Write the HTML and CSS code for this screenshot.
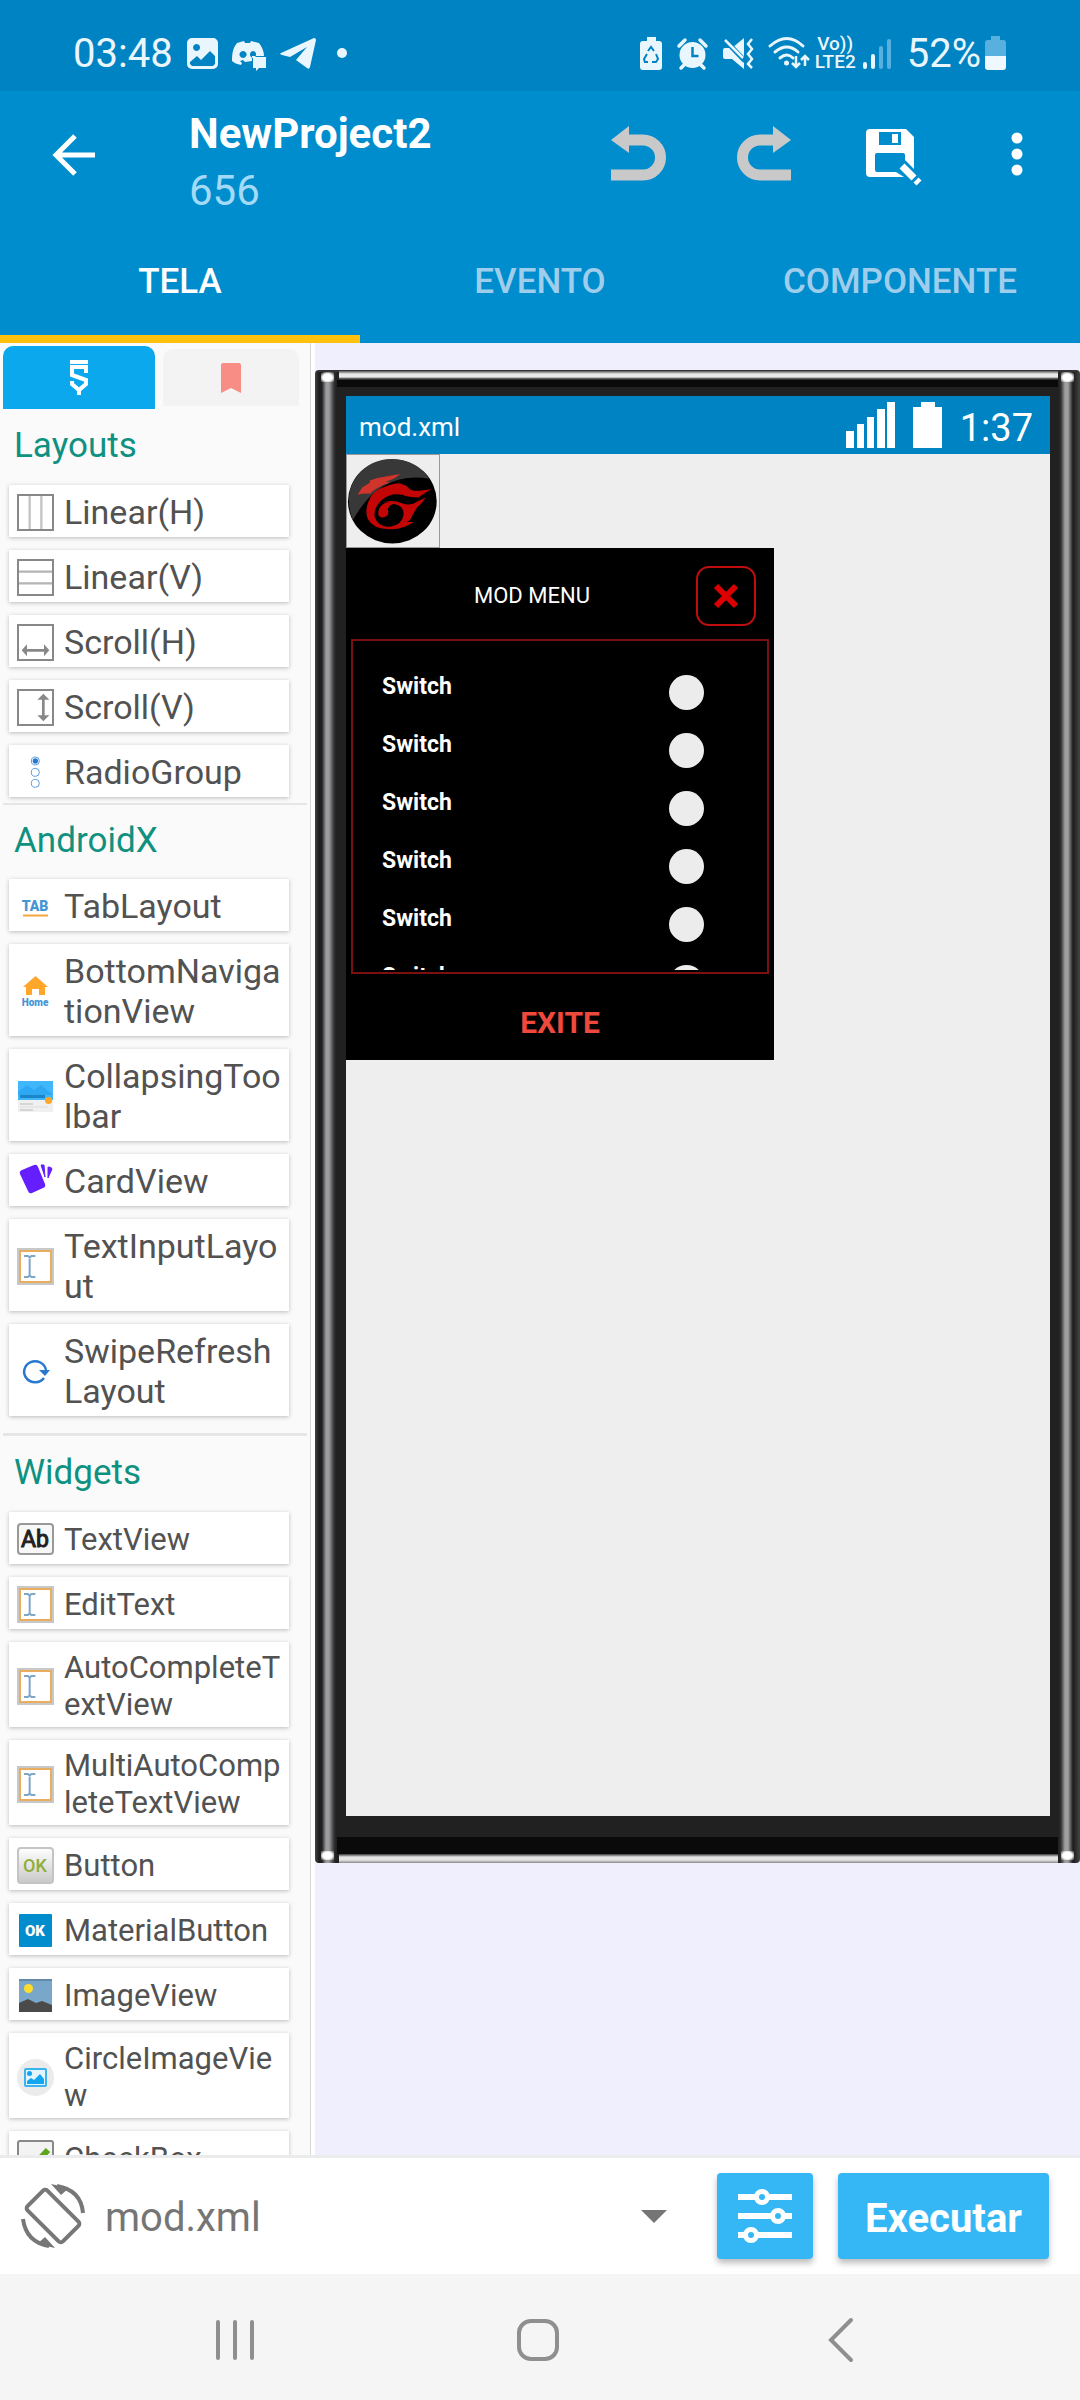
FILE: index.html
```html
<!DOCTYPE html>
<html lang="pt-BR">
<head>
    <meta charset="UTF-8">
    <meta name="viewport" content="width=device-width, initial-scale=1.0">
    <title>NewProject2</title>
    <link rel="stylesheet" href="styles.css">
</head>
<body>

<!-- Ícones usados mais de uma vez -->
<svg class="sprite" aria-hidden="true">
    <symbol id="icon-edit" viewBox="0 0 111 111">
        <rect x="3" y="3" width="105" height="105" fill="#fff" stroke="#c8c8c8" stroke-width="6"/>
        <rect x="9" y="9" width="93" height="93" fill="none" stroke="#e8ad5e" stroke-width="6"/>
        <path d="M21 24h12l5 5 5-5h12M21 87h12l5-5 5 5h12M38 28v56" fill="none" stroke="#7ea6c6" stroke-width="6"/>
    </symbol>
</svg>

<header>
    <div class="status-bar">
        <div class="status-left">
            <span>03:48</span>
            <svg width="31" height="31" viewBox="0 0 31 31"><path fill="#eaf6fd" fill-rule="evenodd" d="M5 0h21a5 5 0 0 1 5 5v21a5 5 0 0 1-5 5H5a5 5 0 0 1-5-5V5a5 5 0 0 1 5-5zM9.500 6a3.500 3.500 0 1 0 .1 0zM3 24v2l2 2h21l2-2v-8l-5-5-9 9-4-4z"/></svg>
            <svg width="34" height="31" viewBox="0 0 34 31"><path fill="#eaf6fd" fill-rule="evenodd" d="M5 5l7-2 1 2h5l1-2 8 2c3 4 5 8 5 13H20v5l-7 1-2-2-3 1 2 2-1 2c-4-1-7-2-9-4 0-8 1-13 5-18zM11 13a3.500 3.500 0 1 0 .1 0zM21 13a3 3.500 0 1 0 .1 0z"/><path fill="#eaf6fd" d="M21 19h13v11h-7l-3 3v-3h-3z"/></svg>
            <svg width="36" height="31" viewBox="0 0 36 31"><path fill="#eaf6fd" d="M1 15L34 0q2 0 2 2l-6 27q-1 3-3 1l-11-8L27 9 10 19l-8-2q-3-1-1-2z"/></svg>
            <svg width="24" height="12" viewBox="0 0 24 12"><circle cx="12" cy="6" r="5" fill="#eaf6fd"/></svg>
        </div>
        <div class="status-right">
            <svg width="22" height="33" viewBox="0 0 22 33"><path fill="#eaf6fd" d="M7 0h9v4h3q3 0 3 3v23q0 3-3 3H3q-3 0-3-3V7q0-3 3-3h4z"/><path d="M8 14l3-4 3 4M16 17l2 5-2 3h-4M8 25H5l-1-3 3-5" fill="none" stroke="#0083c2" stroke-width="2"/></svg>
            <svg width="29" height="31" viewBox="0 0 29 31"><path d="M1 8l6-6M28 8l-6-6M7 26l-4 4M22 26l4 4" stroke="#eaf6fd" stroke-width="3.500" stroke-linecap="round"/><circle cx="14.500" cy="17" r="13" fill="#eaf6fd"/><path d="M14.500 9v9h6" fill="none" stroke="#0083c2" stroke-width="2.500"/></svg>
            <svg width="30" height="31" viewBox="0 0 30 31"><path fill="#eaf6fd" d="M0 12q0-2 2-2h7l12-10v31L9 21H2q-2 0-2-2z"/><path d="M1 1l21 22" stroke="#0083c2" stroke-width="5"/><path d="M2 2l18 18" stroke="#eaf6fd" stroke-width="2.500"/><path d="M29 1l-4 5 4 5-4 5 4 5-4 5 4 4" fill="none" stroke="#eaf6fd" stroke-width="2.500"/></svg>
            <div class="network">
                <svg width="42" height="32" viewBox="0 0 42 32"><path d="M1 9q17-15 33 0M6 15q12-10 23 0M11 21q7-6 13 0" fill="none" stroke="#eaf6fd" stroke-width="3" stroke-linecap="round"/><circle cx="17.500" cy="26" r="2.500" fill="#eaf6fd"/><path d="M27 19v11m-4-4l4 4 4-4M36 29V19m-4 4l4-4 4 4" fill="none" stroke="#eaf6fd" stroke-width="2.500"/></svg>
                <div class="volte"><span>Vo))</span><span>LTE2</span></div>
                <svg width="28" height="31" viewBox="0 0 28 31"><path d="M2 26v3M10 18v11" stroke="#eaf6fd" stroke-width="4" stroke-linecap="round"/><path d="M18 10v19M26 3v26" stroke="#58b0df" stroke-width="4" stroke-linecap="round"/></svg>
            </div>
            <div class="battery">
                <span>52%</span>
                <svg width="21" height="34" viewBox="0 0 21 34"><path fill="#58b0df" d="M6 0h9v4h3q3 0 3 3v13H0V7q0-3 3-3h3z"/><path fill="#eff8fe" d="M0 20h21v11q0 3-3 3H3q-3 0-3-3z"/></svg>
            </div>
        </div>
    </div>

    <div class="toolbar">
        <button class="back-btn" aria-label="Voltar"><svg width="42" height="42" viewBox="0 0 42 42"><path d="M42 21H3M22 2L3 21l19 19" fill="none" stroke="#fff" stroke-width="5"/></svg></button>
        <div class="project">
            <h1>NewProject2</h1>
            <p>656</p>
        </div>
        <div class="actions">
            <button aria-label="Desfazer"><svg width="56" height="58" viewBox="0 0 56 58"><path d="M0 49h32a17.500 17.500 0 0 0 0-35H16" fill="none" stroke="#c9c9c9" stroke-width="11"/><path d="M0 14L18 0v27z" fill="#c9c9c9"/></svg></button>
            <button aria-label="Refazer"><svg width="54" height="58" viewBox="0 0 54 58"><path d="M53 49H22a17.500 17.500 0 0 1 0-35h16" fill="none" stroke="#c9c9c9" stroke-width="11"/><path d="M53 14L35 0v27z" fill="#c9c9c9"/></svg></button>
            <button aria-label="Salvar"><svg width="64" height="60" viewBox="0 0 64 60"><path fill="#fff" fill-rule="evenodd" d="M11 4h36l8 8v32L46 35v-5q0-2-2-2H18q-2 0-2 2v15q0 2 2 2h19l8 5H11q-4 0-4-4V8q0-4 4-4zM20 7v13h22V7z"/><path fill="#fff" d="M33 9h6v9h-6z"/><path d="M43 41l12 12" stroke="#fff" stroke-width="7"/><path d="M57 55l3 3" stroke="#fff" stroke-width="7"/></svg></button>
            <button aria-label="Mais opções"><svg width="12" height="46" viewBox="0 0 12 46"><g fill="#fff"><circle cx="6" cy="6" r="5.500"/><circle cx="6" cy="22" r="5.500"/><circle cx="6" cy="38" r="5.500"/></g></svg></button>
        </div>
    </div>

    <nav class="tabs">
        <a href="#tela" class="active">TELA</a>
        <a href="#evento">EVENTO</a>
        <a href="#componente">COMPONENTE</a>
    </nav>
</header>

<main>
    <aside class="palette">
        <div class="palette-tabs">
            <button class="selected" aria-label="Componentes"><svg width="18" height="36" viewBox="0 0 18 36"><path d="M0 2h18M16 13V7H2v8l14 5v4l-7 6-7-6v-3M9 29v6" fill="none" stroke="#fff" stroke-width="4"/></svg></button>
            <button aria-label="Favoritos"><svg width="20" height="30" viewBox="0 0 20 30"><path d="M2 0h16q2 0 2 2v28l-10-5-10 5V2q0-2 2-2z" fill="#f88d86"/></svg></button>
        </div>

        <!-- Layouts -->
        <section>
            <h2>Layouts</h2>
            <div class="items">
                <button><svg viewBox="0 0 111 111"><path d="M38 4v103M73 4v103" stroke="#c4c4c4" stroke-width="7"/><rect x="3" y="3" width="105" height="105" fill="none" stroke="#888" stroke-width="6"/></svg><span>Linear(H)</span></button>
                <button><svg viewBox="0 0 111 111"><path d="M4 38h103M4 73h103" stroke="#b4b4b4" stroke-width="7"/><rect x="3" y="3" width="105" height="105" fill="none" stroke="#888" stroke-width="6"/></svg><span>Linear(V)</span></button>
                <button><svg viewBox="0 0 111 111"><rect x="3" y="3" width="105" height="105" fill="#fff" stroke="#888" stroke-width="6"/><path d="M14 79l16-18v14h51V61l16 18-16 18V83H30v14z" fill="#888"/></svg><span>Scroll(H)</span></button>
                <button><svg viewBox="0 0 111 111"><rect x="3" y="3" width="105" height="105" fill="#fff" stroke="#888" stroke-width="6"/><path d="M79 14l18 18H83v47h14L79 97 61 79h14V32H61z" fill="#888"/></svg><span>Scroll(V)</span></button>
                <button><svg viewBox="0 0 111 111"><g fill="none" stroke="#5d9bdc" stroke-width="3"><circle cx="55" cy="21" r="12"/><circle cx="55" cy="55" r="12"/><circle cx="55" cy="88" r="12"/></g><circle cx="55" cy="21" r="8" fill="#2478d0"/></svg><span>RadioGroup</span></button>
            </div>
        </section>

        <!-- AndroidX -->
        <section class="androidx">
            <h2>AndroidX</h2>
            <div class="items">
                <button><svg viewBox="0 0 37 37"><text x="18" y="23" font-size="14" font-weight="900" fill="#4595d6" text-anchor="middle">TAB</text><path d="M6 27.500h25" stroke="#f4a63c" stroke-width="2"/></svg><span>TabLayout</span></button>
                <button><svg viewBox="0 0 37 37"><path d="M18.500 3L31 14h-3v8h-6v-6h-7v6H9v-8H6z" fill="#ffa62b"/><text x="18" y="33" font-size="10" font-weight="900" fill="#4595d6" text-anchor="middle">Home</text></svg><span>BottomNavigationView</span></button>
                <button><svg viewBox="0 0 37 37"><path d="M1 3h35v19H1z" fill="#40b7fb"/><path d="M1 14l9-7 7 5 7-5 11 9v1H1z" fill="#2fa8f4"/><path d="M3 17h25v3H3z" fill="#1a86c8"/><path d="M1 22h35v12H1z" fill="#f0f0f0"/><path d="M3 26h13M3 32h13" stroke="#bbb"/><path d="M3 29h28" stroke="#ddd"/><circle cx="31.500" cy="22.500" r="3.500" fill="#ffa62b"/></svg><span>CollapsingToolbar</span></button>
                <button><svg viewBox="0 0 37 37"><path d="M5 7l12-5q3-1 4 2l7 17q1 3-2 4l-11 5q-3 1-4-2L3 11q-1-3 2-4z" fill="#651fff"/><path d="M24 2h3l1 12zM31 4q4 0 4 2l-4 9z" fill="#651fff" stroke="#651fff" stroke-width="1"/></svg><span>CardView</span></button>
                <button><svg><use href="#icon-edit"/></svg><span>TextInputLayout</span></button>
                <button><svg viewBox="0 0 37 37"><path d="M27 25a11 10.500 0 1 1 2-8" fill="none" stroke="#2878cf" stroke-width="2.500"/><path d="M22 17h11l-5 6z" fill="#2878cf"/></svg><span>SwipeRefreshLayout</span></button>
            </div>
        </section>

        <!-- Widgets -->
        <section class="widgets">
            <h2>Widgets</h2>
            <div class="items">
                <button><svg viewBox="0 0 37 37"><rect x="1" y="3" width="35" height="30" rx="3" fill="#f7f7f7" stroke="#999" stroke-width="2"/><text x="18" y="26" font-size="23" fill="#222" stroke="#222" text-anchor="middle">Ab</text></svg><span>TextView</span></button>
                <button><svg><use href="#icon-edit"/></svg><span>EditText</span></button>
                <button><svg><use href="#icon-edit"/></svg><span>AutoCompleteTextView</span></button>
                <button><svg><use href="#icon-edit"/></svg><span>MultiAutoCompleteTextView</span></button>
                <button><svg viewBox="0 0 37 37"><defs><linearGradient id="okfill" x2="0" y2="1"><stop stop-color="#fff"/><stop offset="1" stop-color="#c8c8c8"/></linearGradient></defs><rect x="1" y="1" width="35" height="35" rx="3" fill="url(#okfill)" stroke="#c4c4c4" stroke-width="2"/><text x="18" y="25" font-size="18" font-weight="500" fill="#8fae38" text-anchor="middle">OK</text></svg><span>Button</span></button>
                <button><svg viewBox="0 0 37 37"><rect x="2" y="2" width="33" height="33" rx="1" fill="#008dcd"/><text x="18" y="24" font-size="15" font-weight="900" fill="#fff" text-anchor="middle">OK</text></svg><span>MaterialButton</span></button>
                <button><svg viewBox="0 0 37 37"><path d="M2 2h33v33H2z" fill="#79a7c9"/><path d="M2 3h33" stroke="#638aa8" stroke-width="2"/><circle cx="11.500" cy="11.500" r="4.500" fill="#ffdc2e"/><path d="M2 26l9-4 8 4 6-2 10 4v7H2z" fill="#4a4a4a"/></svg><span>ImageView</span></button>
                <button><svg viewBox="0 0 37 37"><circle cx="18.500" cy="18.500" r="18.500" fill="#ebebeb"/><rect x="8" y="10" width="21" height="17" rx="1" fill="#e4f4fd" stroke="#3ab4ef" stroke-width="2"/><circle cx="12.500" cy="14.500" r="2.500" fill="#12a5f0"/><path d="M10 25v-3l4-3 3 2 6-6 4 5v5z" fill="#12a5f0"/></svg><span>CircleImageView</span></button>
                <button><svg viewBox="0 0 37 37"><rect x="1" y="1" width="35" height="35" rx="2" fill="#f3f3f3" stroke="#888" stroke-width="2"/><path d="M8 19l7 8L31 10" fill="none" stroke="#5ea51b" stroke-width="6"/></svg><span>CheckBox</span></button>
            </div>
        </section>
    </aside>

    <div class="canvas">
        <div class="phone">
            <div class="screen">
                <div class="screen-bar">
                    <span class="file-name">mod.xml</span>
                    <svg width="49" height="46" viewBox="0 0 49 46"><path fill="#fff" d="M0 29h8v17H0zM11 22h7v24h-7zM21 15h7v31h-7zM31 7h8v39h-8zM41 0h8v46h-8z"/></svg>
                    <svg width="29" height="46" viewBox="0 0 29 46"><path fill="#fff" d="M8 0h14v5h7v41H0V5h8z"/></svg>
                    <span class="clock">1:37</span>
                </div>

                <div class="image-view">
                    <svg viewBox="110 312 280 282">
                        <ellipse cx="248" cy="453" rx="135" ry="128" fill="#000"/>
                        <path d="M128 510C85 400 165 322 248 324q75 3 113 60-150-25-233 126z" fill="#383838"/>
                        <path d="M142 433l15-23 24-14-3-6 24-8 70-12q-22 19-44 23l12 3q-42 15-60 34-15-3-38 3z" fill="#d0342a"/>
                        <path d="M210 415q30-15 60-17l22 8q8 16 38 15l38-5q-20 10-28 16l-12 9q-30 0-50-8-35-7-62 16-27 24-20 58-2-45 32-53 24-6 50 5 25 10 48-6l24-12q-15 22-26 29l-15 25q-4 16-18 21l22 0q-32 22-66 22-55 3-74-31-9-25 2-53 10-27 35-39z" fill="#c30505"/>
                        <path d="M248 460q36 3 34 35-4 27-38 35-38 3-49-28-5-25 12-40 15-11 41-2z" fill="#000"/>
                        <path d="M205 492q0-32 33-36 20-2 38 6-34-7-42 14 6 21-9 25-15 4-20-9z" fill="#c30505"/>
                    </svg>
                </div>

                <div class="mod-menu">
                    <div class="mod-header">
                        <h3>MOD MENU</h3>
                        <button class="close-btn" aria-label="Fechar"><svg width="24" height="24" viewBox="0 0 24 24"><path d="M2 2l20 20M22 2L2 22" stroke="#dc0000" stroke-width="6"/></svg></button>
                    </div>
                    <div class="switch-box">
                        <div class="switch-list">
                            <label>Switch<input type="checkbox"></label>
                            <label>Switch<input type="checkbox"></label>
                            <label>Switch<input type="checkbox"></label>
                            <label>Switch<input type="checkbox"></label>
                            <label>Switch<input type="checkbox"></label>
                            <label>Switch<input type="checkbox"></label>
                        </div>
                    </div>
                    <button class="exit-btn">EXITE</button>
                </div>
            </div>
        </div>
    </div>
</main>

<div class="bottom-bar">
    <button class="rotate-btn" aria-label="Girar tela"><svg width="64" height="64" viewBox="0 0 64 64"><rect x="18" y="10" width="28" height="50" rx="3" transform="rotate(-45 32 32) translate(0 -3)" fill="none" stroke="#777" stroke-width="4"/><path d="M36 2q24 4 26 27M2 35q3 23 26 27" fill="none" stroke="#777" stroke-width="4"/><path d="M30 0l18 4-8 7zM34 64l-18-4 8-7z" fill="#777"/></svg></button>
    <div class="file-select">
        <select aria-label="Arquivo">
            <option>mod.xml</option>
        </select>
    </div>
    <button class="blue-btn settings-btn" aria-label="Opções"><svg width="54" height="54" viewBox="0 0 54 54"><path d="M0 8h54M0 27h54M0 46h54" stroke="#fff" stroke-width="6"/><g fill="#35b7f6" stroke="#fff" stroke-width="5"><circle cx="24" cy="8" r="5.500"/><circle cx="40" cy="27" r="5.500"/><circle cx="13" cy="46" r="5.500"/></g></svg></button>
    <button class="blue-btn run-btn">Executar</button>
</div>

<footer class="system-nav">
    <button aria-label="Recentes"><svg width="38" height="42" viewBox="0 0 38 42"><path d="M2 3v36M19 3v36M36 3v36" stroke="#8f8f8f" stroke-width="4" stroke-linecap="round"/></svg></button>
    <button aria-label="Início"><svg width="42" height="42" viewBox="0 0 42 42"><rect x="2" y="2" width="38" height="38" rx="12" fill="none" stroke="#8f8f8f" stroke-width="4"/></svg></button>
    <button aria-label="Voltar"><svg width="24" height="44" viewBox="0 0 24 44"><path d="M22 2L2 22l20 20" fill="none" stroke="#8f8f8f" stroke-width="4" stroke-linecap="round"/></svg></button>
</footer>

</body>
</html>
```

FILE: styles.css
```css
* {
    box-sizing: border-box;
}
body {
    display: flex;
    flex-direction: column;
    height: 100vh;
    margin: 0;
    font-family: Roboto, "Liberation Sans", sans-serif;
    background-color: #fff;
}
h1, h2, h3, p {
    margin: 0;
    font-weight: 400;
}
button {
    margin: 0;
    padding: 0;
    border: none;
    background: none;
    font-family: inherit;
    cursor: pointer;
}
svg {
    display: block;
    flex: none;
    overflow: visible;
}
.sprite {
    position: absolute;
    width: 0;
    height: 0;
}

/* Cabeçalho */
header {
    flex: none;
    background-color: #008dcd;
    color: #fff;
}
.status-bar {
    display: flex;
    justify-content: space-between;
    height: 91px;
    padding: 15px 74px 0 73px;
    background-color: #0083c2;
    color: #eaf6fd;
    font-size: 40px;
}
.status-left, .status-right {
    display: flex;
    align-items: center;
    gap: 14px;
}
.status-right {
    gap: 16px;
}
.network, .battery {
    display: flex;
    align-items: center;
    gap: 4px;
}
.volte {
    display: flex;
    flex-direction: column;
    align-items: center;
    margin-right: 3px;
    font-size: 19px;
    font-weight: 500;
    line-height: 18px;
}
.toolbar {
    display: flex;
    align-items: center;
    height: 127px;
    padding-left: 53px;
}
.project {
    flex: 1;
    padding: 15px 0 0 94px;
    font-size: 42px;
    line-height: 57px;
}
.project h1 {
    font-size: 42px;
    font-weight: 700;
}
.project p {
    color: #a3daf7;
}
.actions {
    display: flex;
}
.actions button {
    display: flex;
    justify-content: center;
    align-items: center;
    width: 126px;
}
.tabs {
    display: flex;
}
.tabs a {
    flex: 1;
    padding-top: 10px;
    border-bottom: 8px solid transparent;
    color: #9fcdec;
    font-size: 35px;
    font-weight: 500;
    line-height: 107px;
    text-align: center;
    text-decoration: none;
}
.tabs a.active {
    border-color: #ffc10e;
    color: #fff;
}

/* Paleta */
main {
    display: flex;
    flex: 1;
    min-height: 0;
}
.palette {
    flex: none;
    width: 315px;
    padding-top: 3px;
    overflow: hidden;
    background-color: #fafafa;
    border-right: 4px solid #fff;
    box-shadow: inset -1px 0 #d8d8d8;
}
.palette-tabs {
    display: flex;
    align-items: center;
    gap: 8px;
    padding-left: 3px;
}
.palette-tabs button {
    display: flex;
    justify-content: center;
    align-items: center;
    width: 136px;
    height: 57px;
    border-radius: 10px 10px 0 0;
    background-color: #f3f3f3;
}
.palette-tabs .selected {
    width: 152px;
    height: 63px;
    background-color: #0ca8ed;
}
.palette h2 {
    margin-bottom: 2px;
    padding-left: 14px;
    color: #0f9180;
    font-size: 35px;
    line-height: 74px;
}
.androidx {
    margin: 6px 4px 17px 3px;
    border-top: 2px solid #e6e6e6;
}
.androidx h2 {
    padding-left: 11px;
    line-height: 72px;
}
.items {
    display: flex;
    flex-direction: column;
    gap: 13px;
    padding-left: 9px;
}
.androidx .items, .widgets .items {
    padding-left: 6px;
}
.items button {
    display: flex;
    align-items: center;
    gap: 10px;
    width: 280px;
    min-height: 52px;
    padding: 7px 5px 5px 8px;
    background-color: #fff;
    box-shadow: 0 1px 4px #bbb;
    color: #525252;
    font-size: 34px;
    line-height: 40px;
    text-align: left;
    word-break: break-all;
}
.items svg {
    width: 37px;
    height: 37px;
}
.items span {
    flex: 1;
}
.widgets {
    margin: 0 4px 0 3px;
    border-top: 3px solid #e6e6e6;
}
.widgets h2 {
    padding-left: 11px;
}
.widgets .items button {
    padding-bottom: 4px;
    font-size: 31px;
    line-height: 37px;
}

/* Área de visualização */
.canvas {
    flex: 1;
    padding-top: 27px;
    background-color: #f0effe;
}
.phone {
    display: flex;
    aspect-ratio: 765 / 1493;
    padding: 26px 30px 47px 31px;
    border-radius: 4px;
    background:
        radial-gradient(#fff 50%, transparent) 6px 3px / 13px 9px no-repeat,
        radial-gradient(#fff 50%, transparent) right 6px top 3px / 13px 9px no-repeat,
        radial-gradient(#fff 50%, transparent) left 6px bottom 3px / 13px 9px no-repeat,
        radial-gradient(#fff 50%, transparent) right 6px bottom 3px / 13px 9px no-repeat,
        linear-gradient(#555, #e8e8e8 3px, #e8e8e8 6px, #333 8px) 24px 1px / calc(100% - 46px) 9px no-repeat,
        linear-gradient(#333, #e4e4e4 3px, #e4e4e4 6px, #888 9px) 24px 100% / calc(100% - 46px) 9px no-repeat,
        linear-gradient(#333, #333) 0 0 / 100% 2px no-repeat,
        linear-gradient(#0a0a0a, #0a0a0a) 22px 10px / calc(100% - 44px) 7px no-repeat,
        linear-gradient(#0a0a0a, #0a0a0a) 22px calc(100% - 9px) / calc(100% - 44px) 17px no-repeat,
        linear-gradient(90deg, #444, #1c1c1c 4px, #222 7px, #9c9c9f 11px, #9c9c9f 14px, #333 19px, #212121 21px,
            #212121 calc(100% - 21px), #333 calc(100% - 19px), #a0a0a0 calc(100% - 15px), #a0a0a0 calc(100% - 12px), #1c1c1c calc(100% - 7px), #444);
}
.screen {
    flex: 1;
    background-color: #eee;
}
.screen-bar {
    display: flex;
    align-items: center;
    height: 58px;
    padding: 0 17px 0 13px;
    background-color: #0083c2;
    color: #fff;
}
.file-name {
    flex: 1;
    padding-top: 3px;
    font-size: 26px;
}
.screen-bar svg {
    margin-right: 18px;
}
.clock {
    padding-top: 5px;
    font-size: 38px;
}
.image-view {
    width: 94px;
    height: 94px;
    border: 1px solid #999;
}
.mod-menu {
    display: flex;
    flex-direction: column;
    width: 428px;
    height: 512px;
    padding: 0 5px;
    background-color: #000;
}
.mod-header {
    display: flex;
    align-items: center;
    height: 91px;
    padding: 4px 13px 0 5px;
}
.mod-header h3 {
    flex: 1;
    padding-left: 12px;
    color: #fff;
    font-size: 22px;
    text-align: center;
}
.close-btn {
    display: flex;
    justify-content: center;
    align-items: center;
    width: 60px;
    height: 60px;
    border: 2px solid #c00d0d;
    border-radius: 13px;
}
.switch-box {
    height: 335px;
    padding: 2px;
    border: 2px solid #7c0f0f;
}
.switch-list {
    height: 100%;
    padding: 30px 61px 0 27px;
    overflow: hidden;
}
.switch-list label {
    display: flex;
    justify-content: space-between;
    height: 58px;
    color: #fff;
    font-size: 23px;
    font-weight: 700;
    line-height: 27px;
}
.switch-list input {
    appearance: none;
    width: 35px;
    height: 35px;
    margin: 2px 0 0;
    border-radius: 50%;
    background-color: #ececec;
}
.exit-btn {
    flex: 1;
    padding-top: 10px;
    color: #ef483d;
    font-size: 30px;
    font-weight: 700;
}

/* Barra inferior */
.bottom-bar {
    display: flex;
    flex: none;
    align-items: center;
    height: 119px;
    padding: 0 31px 0 21px;
    border-top: 3px solid #eaebed;
}
.file-select {
    display: flex;
    flex: 1;
    align-items: center;
    padding-right: 50px;
}
.file-select::after {
    content: "";
    border: 13px solid transparent;
    border-top-color: #757575;
    border-bottom-width: 0;
}
.file-select select {
    appearance: none;
    flex: 1;
    padding: 2px 20px 0;
    border: none;
    background: none;
    color: #757575;
    font-family: inherit;
    font-size: 40px;
}
.blue-btn {
    display: flex;
    justify-content: center;
    align-items: center;
    height: 86px;
    border-radius: 4px;
    background-color: #35b7f6;
    box-shadow: 0 4px 6px #bbb;
    color: #fff;
    font-size: 40px;
    font-weight: 700;
}
.settings-btn {
    width: 96px;
    margin-right: 25px;
}
.run-btn {
    width: 211px;
    padding-top: 4px;
}

.system-nav {
    display: flex;
    flex: none;
    height: 126px;
    padding: 6px 88px 0 84px;
    background-color: #f5f5f5;
}
.system-nav button {
    display: flex;
    flex: 1;
    justify-content: center;
    align-items: center;
}
```
